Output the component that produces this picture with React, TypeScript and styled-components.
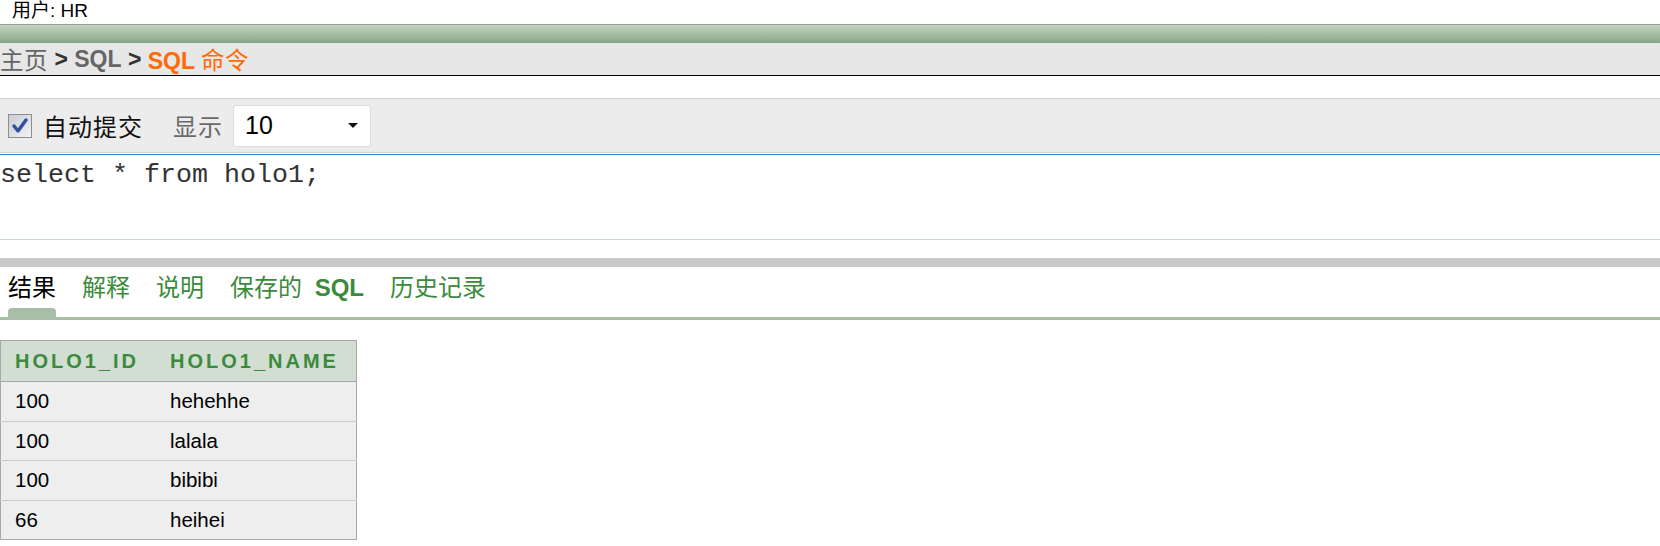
import styled, { createGlobalStyle } from 'styled-components';

// global
const GlobalStyle = createGlobalStyle`
  html, body {
    margin: 0;
    padding: 0;
    background: #ffffff;
    font-family: "Liberation Sans", "Noto Sans CJK SC", sans-serif;
    color: #000;
  }
`;

// data
const tabs = ['结果', '解释', '说明', '保存的 SQL', '历史记录'];
const rows = [
  { id: '100', name: 'hehehhe' },
  { id: '100', name: 'lalala' },
  { id: '100', name: 'bibibi' },
  { id: '66', name: 'heihei' },
];

// CSS
const Page = styled.div`
  width: 1660px;
  display: flex;
  flex-direction: column;
`;

const UserBar = styled.div`
  height: 24px;
  padding-left: 12px;
  font-size: 19px;
  line-height: 21px;
`;

const GreenBar = styled.div`
  height: 18px;
  border-top: 1px solid #9a9a9a;
  background: linear-gradient(#c3d5c2, #86a686);
`;

const Breadcrumb = styled.div`
  height: 32px;
  display: flex;
  align-items: center;
  background: #e6e7e6;
  border-bottom: 1px solid #000;
  font-size: 23px;
  white-space: pre;
`;

const Crumb = styled.span<{ $tone: 'link' | 'sep' | 'current' }>`
  color: ${(p) => (p.$tone === 'current' ? '#ff6a06' : p.$tone === 'sep' ? '#333' : '#666')};
  font-weight: ${(p) => (p.$tone === 'link' ? 'normal' : 'bold')};
`;

const CrumbBold = styled.span`
  font-weight: bold;
`;

const CrumbCjk = styled.span`
  font-weight: normal;
  font-size: 23.5px;
  letter-spacing: 0.5px;
`;

const Toolbar = styled.div`
  margin-top: 22px;
  height: 53px;
  display: flex;
  align-items: center;
  padding-left: 8px;
  background: #ececec;
  border-top: 1px solid #cfcfcf;
  border-bottom: 1px solid #d2d2d2;
`;

const CheckBox = styled.span`
  width: 22px;
  height: 22px;
  border: 1px solid #8e8e8e;
  background: linear-gradient(135deg, #c9ccd3, #f4f4f6);
  display: flex;
  align-items: center;
  justify-content: center;
`;

const ToolLabel = styled.span<{ $muted?: boolean }>`
  font-size: 24px;
  letter-spacing: 1px;
  color: ${(p) => (p.$muted ? '#6a6a6a' : '#111')};
  margin-left: ${(p) => (p.$muted ? '30px' : '11px')};
`;

const SelectBox = styled.div`
  margin-left: 10px;
  width: 113px;
  height: 40px;
  padding: 0 12px 0 11px;
  box-sizing: content-box;
  display: flex;
  align-items: center;
  justify-content: space-between;
  background: #fff;
  border: 1px solid #dcdcdc;
  border-radius: 3px;
  font-size: 25px;
`;

const Caret = styled.span`
  width: 0;
  height: 0;
  border-left: 5px solid transparent;
  border-right: 5px solid transparent;
  border-top: 5px solid #111;
`;

const Editor = styled.div`
  margin-top: 1px;
  height: 80px;
  padding-top: 4px;
  border-top: 1px solid #3a7fc0;
  border-bottom: 1px solid #bcd6ea;
  font-family: "Liberation Mono", monospace;
  font-size: 26.67px;
  line-height: 32px;
  color: #333;
  white-space: pre;
`;

const Divider = styled.div`
  margin-top: 18px;
  height: 9px;
  background: #c9c9c9;
`;

const TabBar = styled.div`
  height: 50px;
  display: flex;
  gap: 20px;
  padding-left: 5px;
  border-bottom: 3px solid #a9bea8;
`;

const Tab = styled.div`
  display: flex;
  flex-direction: column;
  padding: 0 3px;
`;

const TabLabel = styled.span<{ $active?: boolean }>`
  margin-top: 6px;
  font-size: 24px;
  line-height: 30px;
  white-space: pre;
  color: ${(p) => (p.$active ? '#000' : '#3c8a3c')};
`;

const TabSql = styled.span`
  margin-left: 6px;
  font-weight: bold;
  font-family: "Liberation Sans", sans-serif;
`;

const TabMarker = styled.span<{ $active?: boolean }>`
  margin-top: auto;
  height: 9px;
  border-radius: 4px 4px 0 0;
  background: ${(p) => (p.$active ? '#a9bea8' : 'transparent')};
`;

const ResultTable = styled.table`
  margin-top: 20px;
  width: 357px;
  border-collapse: collapse;
  border: 1px solid #a8a8a8;
`;

const HeadCell = styled.th<{ $w?: number }>`
  width: ${(p) => (p.$w ? `${p.$w}px` : 'auto')};
  height: 40px;
  padding: 0 0 0 14px;
  text-align: left;
  background: #d1ded1;
  border-bottom: 1px solid #a8a8a8;
  color: #3b8a3e;
  font-size: 20px;
  letter-spacing: 3px;
  font-weight: bold;
`;

const Cell = styled.td`
  height: 38.5px;
  padding: 0 0 0 14px;
  background: #eeeeee;
  border-top: 1px solid #cdcdcd;
  font-size: 20.5px;
`;

const App = () => {
  return (
    <Page>
      <GlobalStyle />
      <UserBar>用户: HR</UserBar>
      <GreenBar />
      <Breadcrumb>
        <Crumb $tone="link"><CrumbCjk>主页</CrumbCjk></Crumb>
        <Crumb $tone="sep"> &gt; </Crumb>
        <Crumb $tone="link"><CrumbBold>SQL</CrumbBold></Crumb>
        <Crumb $tone="sep"> &gt; </Crumb>
        <Crumb $tone="current">SQL <CrumbCjk>命令</CrumbCjk></Crumb>
      </Breadcrumb>
      <Toolbar>
        <CheckBox>
          <svg width="18" height="18" viewBox="0 0 18 18">
            <path d="M3 9 L7 14 L15 3" fill="none" stroke="#34509a" strokeWidth="3.5" strokeLinejoin="round" strokeLinecap="round" />
          </svg>
        </CheckBox>
        <ToolLabel>自动提交</ToolLabel>
        <ToolLabel $muted>显示</ToolLabel>
        <SelectBox>
          <span>10</span>
          <Caret />
        </SelectBox>
      </Toolbar>
      <Editor>select * from holo1;</Editor>
      <Divider />
      <TabBar>
        {tabs.map((t, i) => (
          <Tab key={t}>
            <TabLabel $active={i === 0}>
              {t === '保存的 SQL' ? <>保存的 <TabSql>SQL</TabSql></> : t}
            </TabLabel>
            <TabMarker $active={i === 0} />
          </Tab>
        ))}
      </TabBar>
      <ResultTable>
        <thead>
          <tr>
            <HeadCell $w={141}>HOLO1_ID</HeadCell>
            <HeadCell>HOLO1_NAME</HeadCell>
          </tr>
        </thead>
        <tbody>
          {rows.map((r, i) => (
            <tr key={i}>
              <Cell>{r.id}</Cell>
              <Cell>{r.name}</Cell>
            </tr>
          ))}
        </tbody>
      </ResultTable>
    </Page>
  );
};

export default App;
